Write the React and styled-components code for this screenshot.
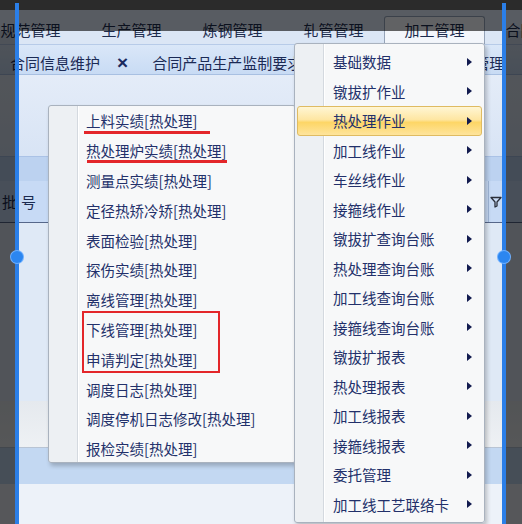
import React from "react";
import styled, { createGlobalStyle } from "styled-components";

const GlobalStyle = createGlobalStyle`
  body {
    margin: 0;
    background: #2b2b2b;
  }
`;

const navItems = ["规范管理", "生产管理", "炼钢管理", "轧管管理", "加工管理", "合同管理"];

const mainItems = [
  "基础数据",
  "镦拔扩作业",
  "热处理作业",
  "加工线作业",
  "车丝线作业",
  "接箍线作业",
  "镦拔扩查询台账",
  "热处理查询台账",
  "加工线查询台账",
  "接箍线查询台账",
  "镦拔扩报表",
  "热处理报表",
  "加工线报表",
  "接箍线报表",
  "委托管理",
  "加工线工艺联络卡",
];

const subItems = [
  "上料实绩[热处理]",
  "热处理炉实绩[热处理]",
  "测量点实绩[热处理]",
  "定径热矫冷矫[热处理]",
  "表面检验[热处理]",
  "探伤实绩[热处理]",
  "离线管理[热处理]",
  "下线管理[热处理]",
  "申请判定[热处理]",
  "调度日志[热处理]",
  "调度停机日志修改[热处理]",
  "报检实绩[热处理]",
];

export default function App() {
  return (
    <>
      <GlobalStyle />
      <Root>
        <Screen>
          <TopFrame />
          <NavBar>
            {navItems.map((n) => (
              <NavItem key={n} $active={n === "加工管理"}>
                {n}
              </NavItem>
            ))}
          </NavBar>
          <TabBar>
            <Tab>
              合同信息维护<Close>×</Close>
            </Tab>
            <Tab>
              合同产品生产监制要求<Close>×</Close>
            </Tab>
            <Tab>
              质量计划产品规范管理<Close>×</Close>
            </Tab>
          </TabBar>
          <Toolbar />
          <GroupBand />
          <GridHeader>
            <HeaderCell>批号</HeaderCell>
            <FilterCell>
              <svg width="12" height="12" viewBox="0 0 12 12">
                <path d="M1 1.5h10L7 6v4L5 11V6z" fill="none" stroke="#2a2f3a" strokeWidth="1.3" strokeLinejoin="round" />
              </svg>
            </FilterCell>
          </GridHeader>
          <GridBody />
          <Pager />
          <FooterBand />
          <BottomArea />
        </Screen>

        <DimTop />
        <DimSide $side="left" />
        <DimSide $side="right" />
        <SelectLine $x={15} />
        <SelectLine $x={502} />
        <Handle $x={17} />
        <Handle $x={504} />

        <SubMenu>
          {subItems.map((s) => (
            <SubItem key={s}>{s}</SubItem>
          ))}
          <Underline $x={35} $y={25} $w={126} />
          <Underline $x={38} $y={54} $w={140} />
          <RedBox />
        </SubMenu>

        <MainMenu>
          {mainItems.map((m) => (
            <MainItem key={m} $active={m === "热处理作业"}>
              {m}
              <Arrow />
            </MainItem>
          ))}
        </MainMenu>
      </Root>
    </>
  );
}

const Root = styled.div`
  position: relative;
  width: 522px;
  height: 524px;
  overflow: hidden;
  font-family: "Noto Sans CJK SC", "Noto Sans", sans-serif;
`;

const Screen = styled.div`
  display: flex;
  flex-direction: column;
  height: 100%;
  background: #edf2f9;
`;

const TopFrame = styled.div`
  height: 10px;
  background: #6c6c6c;
`;

const NavBar = styled.div`
  display: flex;
  align-items: flex-end;
  height: 34px;
  margin-left: -20px;
  background: #dbe6f5;
  border-bottom: 1px solid #b7cbe8;
  flex-shrink: 0;
`;

const NavItem = styled.div`
  flex: 0 0 101px;
  height: 28px;
  box-sizing: border-box;
  display: flex;
  align-items: center;
  justify-content: center;
  padding-bottom: 2px;
  font-size: 15px;
  color: #1c2b4d;
  border: 1px solid ${(p) => (p.$active ? "#95a3b8" : "transparent")};
  border-bottom: none;
  border-radius: 3px 3px 0 0;
  background: ${(p) => (p.$active ? "#f3f6fb" : "transparent")};
`;

const TabBar = styled.div`
  display: flex;
  align-items: center;
  height: 30px;
  padding: 6px 0 0 10px;
  box-sizing: border-box;
  background: linear-gradient(#dae7f8, #c8dbf4);
  border-bottom: 1px solid #a8c0e2;
  white-space: nowrap;
  flex-shrink: 0;
`;

const Tab = styled.div`
  display: flex;
  align-items: center;
  gap: 17px;
  margin-right: 24px;
  font-size: 15px;
  color: #1b2a55;
`;

const Close = styled.span`
  font-family: "Liberation Sans", sans-serif;
  font-size: 19px;
  font-weight: bold;
  color: #1a2a5e;
  line-height: 1;
`;

const Toolbar = styled.div`
  height: 81px;
  background: linear-gradient(#e4ecf8, #d8e4f5);
  flex-shrink: 0;
`;

const GroupBand = styled.div`
  height: 24px;
  background: #bcd2f0;
  border-top: 1px solid #aac2e6;
  flex-shrink: 0;
`;

const GridHeader = styled.div`
  display: flex;
  align-items: center;
  justify-content: space-between;
  height: 41px;
  background: #c7daf5;
  border-bottom: 1px solid #56678a;
  flex-shrink: 0;
`;

const HeaderCell = styled.div`
  padding-left: 2px;
  font-size: 15px;
  letter-spacing: 4px;
  color: #1b2a50;
`;

const FilterCell = styled.div`
  display: flex;
  align-items: center;
  align-self: stretch;
  width: 34px;
  padding-left: 1px;
  box-sizing: border-box;
  margin-right: 0;
  border-left: 1px solid #9fb6d8;
  background: linear-gradient(to right, transparent 14px, #7f95b8 14px, #7f95b8 15px, transparent 15px);
`;

const GridBody = styled.div`
  height: 178px;
  background: #dfe9f6;
  flex-shrink: 0;
`;

const Pager = styled.div`
  height: 46px;
  background: linear-gradient(#e5e9ee, #eef1f4);
  border-bottom: 1px solid #b8c4d4;
  flex-shrink: 0;
`;

const FooterBand = styled.div`
  height: 36px;
  background: #c3d8f2;
  flex-shrink: 0;
`;

const BottomArea = styled.div`
  flex: 1;
  background: #edf2f9;
`;

const DimTop = styled.div`
  position: absolute;
  left: 0;
  top: 0;
  width: 100%;
  height: 31px;
  background: rgba(0, 0, 0, 0.6);
`;

const DimSide = styled.div`
  position: absolute;
  top: 31px;
  bottom: 0;
  ${(p) => (p.$side === "left" ? "left: 0; width: 16px;" : "right: 0; width: 16px;")}
  background: rgba(0, 0, 0, 0.64);
`;

const SelectLine = styled.div`
  position: absolute;
  left: ${(p) => p.$x}px;
  top: 3px;
  bottom: 0;
  width: 4px;
  background: #2b7fe8;
`;

const Handle = styled.div`
  position: absolute;
  left: ${(p) => p.$x - 6}px;
  top: 251px;
  width: 12px;
  height: 12px;
  border-radius: 50%;
  background: #2c86f0;
  box-shadow: 0 0 0 1px #6fb0ff;
`;

const Menu = styled.div`
  position: absolute;
  box-sizing: border-box;
  border: 1px solid #a9b2be;
  border-radius: 3px;
  box-shadow: 2px 3px 4px rgba(0, 0, 0, 0.22);
  background: linear-gradient(
    to right,
    #edf0f3 0,
    #edf0f3 28px,
    #d4d9df 28px,
    #d4d9df 29px,
    #ffffff 29px,
    #ffffff 30px,
    #f7f8f9 30px
  );
`;

const SubMenu = styled(Menu)`
  left: 48px;
  top: 105px;
  width: 248px;
  height: 358px;
`;

const MainMenu = styled(Menu)`
  left: 294px;
  top: 43px;
  width: 191px;
  padding: 3px 0;
`;

const Item = styled.div`
  display: flex;
  align-items: center;
  justify-content: space-between;
  box-sizing: border-box;
  margin: 0 2px;
  border: 1px solid transparent;
  border-radius: 3px;
  font-size: 14.5px;
  color: #22306a;
  white-space: nowrap;
`;

const SubItem = styled(Item)`
  height: 29.8px;
  padding-left: 34px;
`;

const MainItem = styled(Item)`
  height: 29.5px;
  padding: 0 9px 0 35px;
  ${(p) =>
    p.$active &&
    `
    border-color: #dfbb62;
    background: linear-gradient(#fff6d4, #fee6a2 45%, #fdd666 55%, #fee49c);
  `}
`;

const Arrow = styled.span`
  width: 0;
  height: 0;
  border-left: 5px solid #121b4f;
  border-top: 4px solid transparent;
  border-bottom: 4px solid transparent;
`;

const Underline = styled.div`
  position: absolute;
  left: ${(p) => p.$x}px;
  top: ${(p) => p.$y}px;
  width: ${(p) => p.$w}px;
  height: 3px;
  background: #e3262a;
`;

const RedBox = styled.div`
  position: absolute;
  left: 33px;
  top: 205px;
  width: 138px;
  height: 62px;
  box-sizing: border-box;
  border: 2px solid #e3262a;
`;
